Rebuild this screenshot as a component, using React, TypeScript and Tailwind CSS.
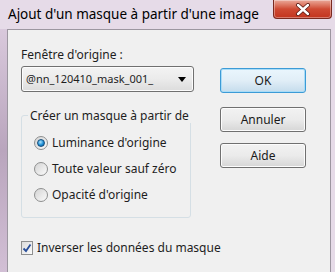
import React from "react";

const font = { fontFamily: '"Noto Sans", "Open Sans", Arial, sans-serif' };

function Radio({ checked, label }: { checked?: boolean; label: string }) {
  return (
    <div className="flex h-[26px] items-center gap-[4px]">
      <span className="flex h-[14px] w-[14px] items-center justify-center rounded-full border border-[#8e8f8f] bg-gradient-to-br from-[#d4d4d4] to-[#fbfbfb]">
        {checked && (
          <span className="h-[8px] w-[8px] rounded-full border border-[#174f7c] bg-[radial-gradient(circle_at_40%_35%,#aee2fb,#1c8fd6_55%,#0d4e8a)]" />
        )}
      </span>
      <span className="whitespace-nowrap">{label}</span>
    </div>
  );
}

function Button({ label, focused, className = "" }: { label: string; focused?: boolean; className?: string }) {
  return (
    <div
      className={`flex h-[25px] w-[86px] items-center justify-center rounded-[3px] border bg-gradient-to-b text-[#1a1a1a] ${className} ${
        focused
          ? "border-[#3c9bd6] from-[#eaf6fd] via-[#e1eef7] to-[#c5dcec] shadow-[inset_0_0_0_1px_#a9dcf7]"
          : "border-[#707070] from-[#f2f2f2] via-[#ebebeb] to-[#d6d6d6] shadow-[inset_0_0_0_1px_#fcfcfc]"
      }`}
    >
      {label}
    </div>
  );
}

export default function App() {
  return (
    <div
      className="relative h-[272px] w-[335px] overflow-hidden bg-[#e6dbe8] text-[12px] text-[#1e1e1e]"
      style={font}
    >
      {/* title bar */}
      <div className="flex h-[29px] items-start pl-[8px] pt-[4px]">
        <span className="whitespace-nowrap text-[13.5px] leading-[20px] text-black">
          Ajout d'un masque à partir d'une image
        </span>
      </div>
      <div className="absolute right-[3px] top-0 flex h-[19px] w-[59px] items-center justify-center rounded-b-[4px] border border-t-0 border-[#7a2a20] bg-gradient-to-b from-[#e9a99a] via-[#cf4a33] to-[#c2341e] shadow-[inset_0_0_0_1px_rgba(255,255,255,0.35)]">
        <svg width="16" height="13" viewBox="0 0 16 13">
          <path d="M3 2 L13 11 M13 2 L3 11" stroke="#5a1a12" strokeWidth="4" strokeLinecap="round" />
          <path d="M3 2 L13 11 M13 2 L3 11" stroke="#fff" strokeWidth="2.4" strokeLinecap="round" />
        </svg>
      </div>

      {/* left frame streaks */}
      <div className="absolute left-0 top-[29px] h-[243px] w-[7px] bg-gradient-to-b from-[#d9c9dc] via-[#b9a5bd] to-[#d2bfd5]" />

      {/* client area */}
      <div className="ml-[7px] mr-[4px] h-[260px] border border-[#9c96a0] bg-[#f0f0f0]">
        <div className="flex pl-[13px] pr-[24px] pt-[17px]">
          <div className="flex w-[173px] flex-col">
            <div className="leading-[15px]">Fenêtre d'origine :</div>
            <div className="mt-[4px] flex h-[26px] items-center justify-between rounded-[3px] border border-[#707070] bg-gradient-to-b from-[#f3f3f3] via-[#ebebeb] to-[#dcdcdc] pl-[4px] pr-[7px] text-[11px] shadow-[inset_0_0_0_1px_#fcfcfc]">
              <span>@nn_120410_mask_001_</span>
              <svg width="8" height="5" viewBox="0 0 8 5">
                <path d="M0 0 L8 0 L4 5 Z" fill="#000" />
              </svg>
            </div>

            <div className="relative mt-[23px] h-[103px] w-[170px] rounded-[3px] border border-[#d5dfe5]">
              <span className="absolute -top-[8px] left-[6px] whitespace-nowrap bg-[#f0f0f0] px-[2px] leading-[15px]">
                Créer un masque à partir de
              </span>
              <div className="flex flex-col pl-[12px] pt-[14px]">
                <Radio checked label="Luminance d'origine" />
                <Radio label="Toute valeur sauf zéro" />
                <Radio label="Opacité d'origine" />
              </div>
            </div>

            <div className="mt-[21px] flex items-center gap-[4px]">
              <span className="flex h-[14px] w-[14px] items-center justify-center border border-[#8e8f8f] bg-gradient-to-br from-[#dcdcdc] to-[#fbfbfb]">
                <svg width="10" height="10" viewBox="0 0 10 10">
                  <path d="M1.5 5.5 L4 8 L8.5 1.5" stroke="#2a4f9a" strokeWidth="1.8" fill="none" />
                </svg>
              </span>
              <span className="whitespace-nowrap">Inverser les données du masque</span>
            </div>
          </div>

          <div className="ml-auto flex flex-col pt-[21px]">
            <Button label="OK" focused />
            <Button label="Annuler" className="mt-[14px]" />
            <Button label="Aide" className="mt-[11px]" />
          </div>
        </div>
      </div>
    </div>
  );
}
